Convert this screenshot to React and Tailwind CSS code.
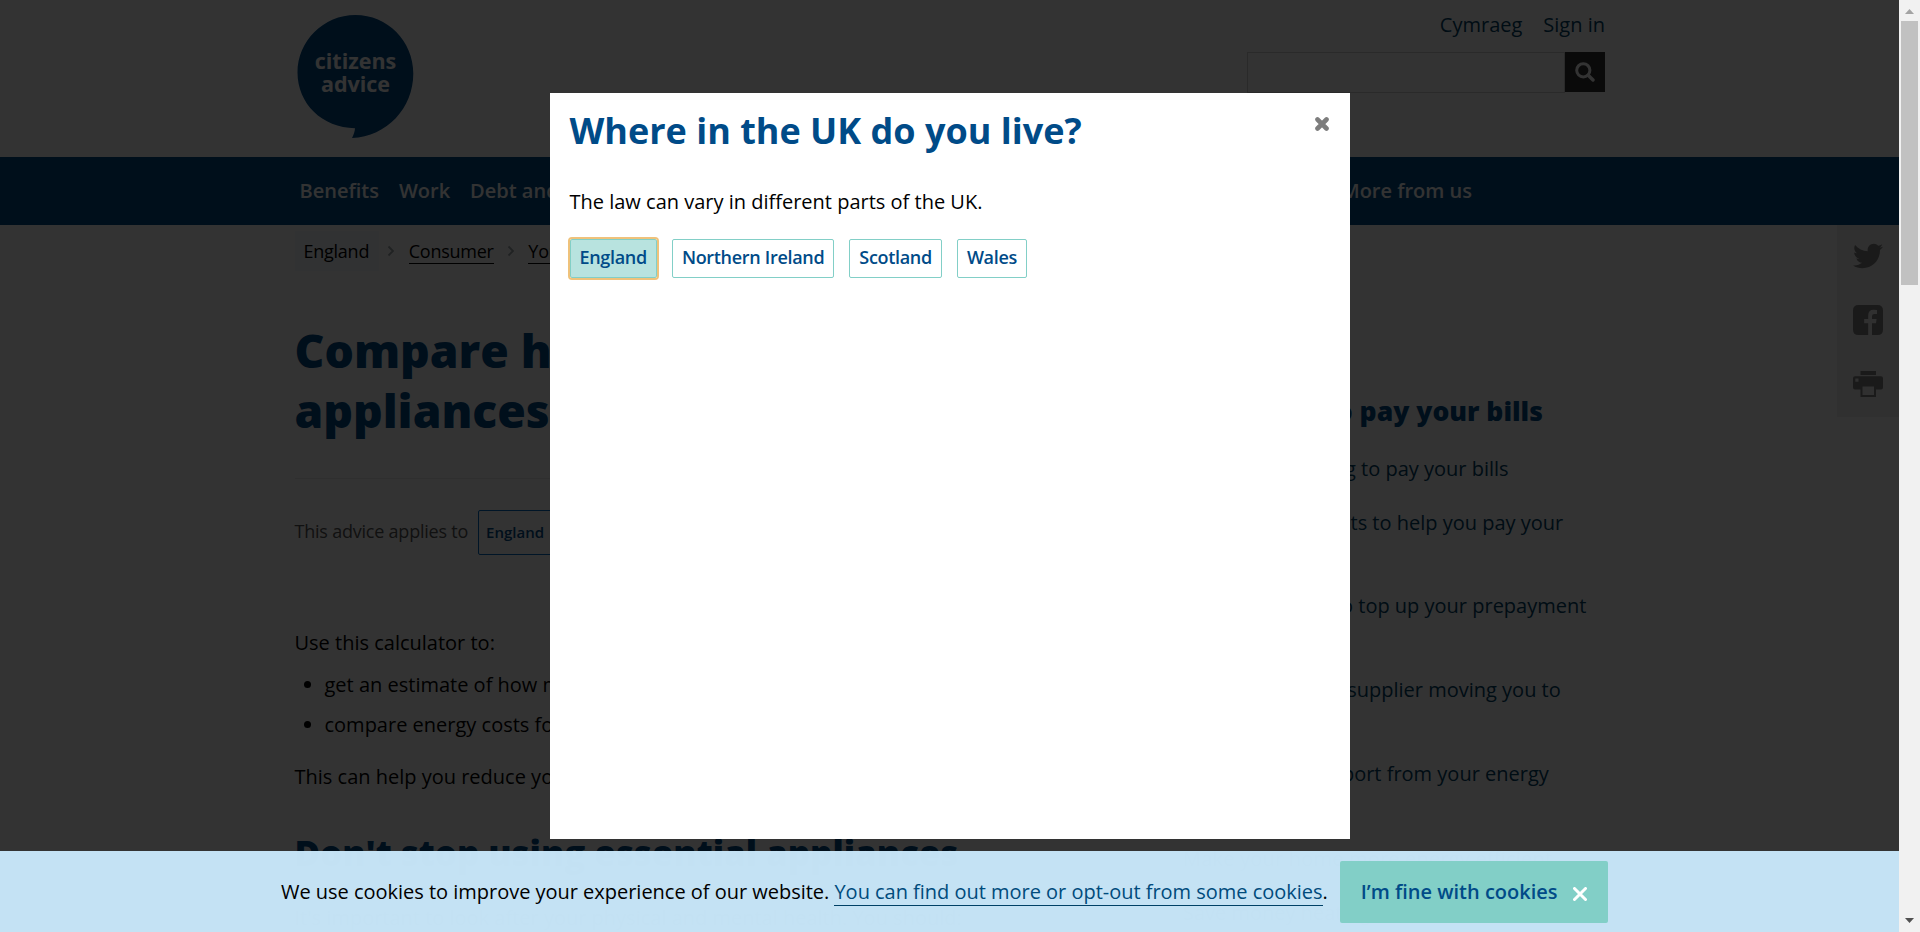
import { FaTwitter } from "react-icons/fa";

const SIDE = [
  { lines: ["If you're struggling to pay your bills"], cls: "h-[54px]" },
  { lines: ["Grants and benefits to help you pay your", "energy bills"], cls: "h-[83px]" },
  { lines: ["If you can't afford to top up your prepayment", "meter"], cls: "h-[84px] -ml-[18px]" },
  { lines: ["Stop your energy supplier moving you to", "prepayment"], cls: "h-[84px]" },
  { lines: ["Get help and support from your energy", "supplier"], cls: "h-[85px]" },
  { lines: ["Make your home more energy efficient"], cls: "h-[54px] tracking-[0.2px]" },
  { lines: ["Save money heating"], cls: "h-[54px]" },
];

function Chevron() {
  return (
    <svg className="h-3 w-2" viewBox="0 0 8 12" fill="none" stroke="#a0a8ac" strokeWidth="1.8">
      <path d="M1.5 1.5 6 6 1.5 10.5" />
    </svg>
  );
}

function Header() {
  return (
    <header className="flex h-[157px] justify-between pl-[297px] pr-[294px]">
      <div className="grid pt-[15px]">
        <svg className="col-start-1 row-start-1 h-[123px] w-[117px]" viewBox="0 0 117 123">
          <path
            fill="#004b88"
            d="M58.4 0C90.4 0 116.3 26 116.3 58.5C116.3 93 90 121.5 55 123C56.800 119.500 57.800 116.500 58 113.200C25 112.800 .5 88.500 .5 57.500C.5 26 26.500 0 58.400 0Z"
          />
        </svg>
        <div className="col-start-1 row-start-1 pt-[34px] text-center text-[21.5px] leading-[23px] font-bold text-white">
          citizens
          <br />
          advice
        </div>
      </div>
      <div className="flex flex-col items-end">
        <div className="flex h-[52px] gap-[21px] pt-[9px] text-[20px] leading-[32px] text-[#004166]">
          <a>Cymraeg</a>
          <a>Sign in</a>
        </div>
        <div className="flex h-[41px]">
          <div className="w-[318px] border border-[#d0d0d0]" />
          <button className="flex h-10 w-10 items-center justify-center bg-[#333]">
            <svg className="h-5 w-5" viewBox="0 0 20 20" fill="none" stroke="#fff">
              <circle cx="8.300" cy="8.300" r="6.600" strokeWidth="3" />
              <path d="M13.200 13.200 18 18" strokeWidth="3.400" strokeLinecap="round" />
            </svg>
          </button>
        </div>
      </div>
    </header>
  );
}

function ShareBar() {
  return (
    <div className="ml-auto grid h-[192px] w-[62px] grid-rows-3 place-items-center bg-[#efefef] pb-[1px] text-[#808080]">
      <FaTwitter className="mb-[2px] size-[30px]" />
      <svg className="size-[30px]" viewBox="0 0 30 30" fill="currentColor">
        <path d="M5.500 0h19Q30 0 30 5.500v19Q30 30 24.500 30h-5.500V18.200h4l.6-4.300h-4.600v-2.700q0-2.300 2.300-2.300h2.700V5q-1.700-.2-3.500-.2-5.300 0-5.300 5.600v3.500h-4v4.300h4V30H5.500Q0 30 0 24.500v-19Q0 0 5.500 0Z" />
      </svg>
      <svg className="h-[26px] w-[30px]" viewBox="0 0 30 26" fill="currentColor">
        <path
          fillRule="evenodd"
          d="M7.500 0h15.500v4h-15.500zM2 5.300h26q2 0 2 2v9.200q0 2-2 2h-5v7.500h-15.500v-7.500h-5.500q-2 0-2-2v-9.200q0-2 2-2zM9.500 15.500v8.500h11.500v-8.500zM2.300 7.500v3.200h3.200v-3.200z"
        />
      </svg>
    </div>
  );
}

function Page() {
  return (
    <div className="h-full overflow-hidden bg-white">
      <Header />
      <nav className="flex h-[68px] items-center justify-between bg-[#004b88] pr-[427px] pl-[299.5px] text-[20px] font-semibold text-white">
        <div className="flex gap-5">
          <a>Benefits</a>
          <a>Work</a>
          <a>Debt and</a>
        </div>
        <a>More from us</a>
      </nav>
      <div className="flex h-[707px]">
        <main className="w-[700px] shrink-0 pl-[294.5px] whitespace-nowrap">
          <div className="flex h-[52px] items-center gap-[13.3px] text-[18px] tracking-[-0.25px]">
            <span className="-mr-[5px] bg-[#f4f9fd] py-2 pr-[10px] pl-[9px] leading-6">England</span>
            <Chevron />
            <span className="mt-[2px] border-b border-black leading-[23px]">Consumer</span>
            <Chevron />
            <span className="mt-[2px] border-b border-black leading-[23px]">Your</span>
          </div>
          <h1 className="mt-[44px] text-[46.2px] leading-[60px] font-extrabold text-[#004b88]">
            Compare how much
            <br />
            appliances cost
          </h1>
          <div className="mt-[37px] border-t border-[#e8e8e8]" />
          <div className="mt-[31px] flex items-center text-[18px] text-[#555]">
            <span className="pb-[2px] tracking-[-0.22px]">This advice applies to</span>
            <span className="ml-[10px] flex h-[45px] items-center rounded-[2px] border border-[#006cc4] px-[7px] text-[15px] font-semibold text-[#004b88]">
              England
            </span>
          </div>
          <p className="mt-[72px] text-[20px] leading-8">Use this calculator to:</p>
          <ul className="mt-[6px] ml-[30px] list-disc text-[20px] leading-10">
            <li>get an estimate of how much</li>
            <li>compare energy costs for</li>
          </ul>
          <p className="mt-[16px] text-[20px] leading-8">This can help you reduce your bills</p>
          <h2 className="mt-[35px] text-[34.8px] leading-[50px] font-extrabold text-[#004b88]">
            Don't stop using essential appliances
          </h2>
          <p className="mt-[24px] text-[20px] leading-8">
            It's important to look after your physical and mental health. You should:
          </p>
        </main>
        <aside className="w-[425px] shrink-0 pt-[167px] pl-[483px] whitespace-nowrap">
          <h3 className="-ml-[7px] h-[61px] text-[26.5px] leading-[39px] font-extrabold text-[#004b88]">
            Struggling to pay your bills
          </h3>
          {SIDE.map((r) => (
            <div key={r.lines[0]} className={"text-[20px] leading-8 text-[#004166] " + r.cls}>
              {r.lines.map((l) => (
                <p key={l}>{l}</p>
              ))}
            </div>
          ))}
        </aside>
        <ShareBar />
      </div>
    </div>
  );
}

const PILL = "flex h-[39px] items-center rounded-[2px] border border-[#82cfc7] px-[9px] pb-[2px]";

function Dialog() {
  return (
    <div className="absolute inset-0 bg-black/80 pt-[93px] pl-[550px]">
      <section className="flex h-[746px] w-[800px] justify-between bg-white pr-[21px] pl-[19.5px]">
        <div>
          <h2 className="mt-[13px] text-[36px] leading-[50px] font-bold text-[#004b88]">Where in the UK do you live?</h2>
          <p className="mt-[30px] text-[20px] leading-8">The law can vary in different parts of the UK.</p>
          <div className="mt-[21px] flex gap-[15px] text-[18px] font-semibold tracking-[-0.31px] text-[#004b88]">
            <button className={PILL + " bg-[#b8e3df] outline-2 outline-[#efc27b]"}>England</button>
            <button className={PILL}>Northern Ireland</button>
            <button className={PILL}>Scotland</button>
            <button className={PILL}>Wales</button>
          </div>
        </div>
        <svg className="mt-[24px] h-[14px] w-[14px]" viewBox="0 0 14 14" stroke="#7d7d7d" strokeWidth="4.600">
          <path d="M2.500 2.500 11.500 11.500M11.500 2.500 2.500 11.500" strokeLinecap="round" />
        </svg>
      </section>
    </div>
  );
}

function CookieBar() {
  return (
    <div className="absolute inset-x-0 bottom-0 flex h-[81px] bg-[#c9e8fb]/97 pl-[281px] text-[20px] whitespace-nowrap">
      <p className="mt-[25px] leading-8 tracking-[-0.02px]">
        We use cookies to improve your experience of our website.{" "}
        <a className="border-b border-[#004166] text-[#004b7c]">You can find out more or opt-out from some cookies</a>.
      </p>
      <button className="mt-[10px] ml-3 flex h-[62px] items-center rounded-[2px] bg-[#82cfc7] px-[21px] font-semibold text-[#004b88]">
        I’m fine with cookies
        <svg className="mt-1 ml-[15px] h-[14px] w-[14px]" viewBox="0 0 14 14" stroke="#fff" strokeWidth="3">
          <path d="M1.500 1.500 12.500 12.500M12.500 1.500 1.500 12.500" strokeLinecap="round" />
        </svg>
      </button>
    </div>
  );
}

export default function App() {
  return (
    <div className="flex h-[932px] w-[1920px] overflow-hidden bg-white font-['Open_Sans',sans-serif] text-black">
      <div className="relative h-full w-[1899px] shrink-0 overflow-hidden">
        <Page />
        <Dialog />
        <CookieBar />
      </div>
      <div className="flex h-full w-[21px] flex-col items-center bg-[#f1f1f1]">
        <svg className="mt-[9px] h-[5px] w-[9px]" viewBox="0 0 9 5"><path d="M0 5 4.500 0 9 5Z" fill="#a3a3a3" /></svg>
        <div className="mt-[7px] h-[264px] w-[17px] bg-[#c1c1c1]" />
        <svg className="mt-auto mb-[9px] h-[5px] w-[9px]" viewBox="0 0 9 5"><path d="M0 0 4.500 5 9 0Z" fill="#505050" /></svg>
      </div>
    </div>
  );
}
